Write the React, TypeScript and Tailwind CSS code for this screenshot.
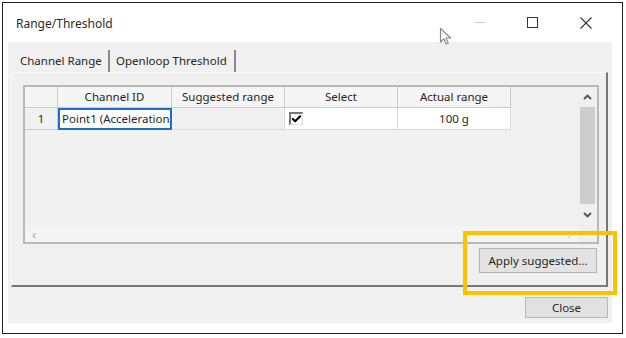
import { Check } from 'lucide-react';

const font = { fontFamily: '"Noto Sans", "Open Sans", sans-serif' };

// Dialog "Range/Threshold" with the Channel Range tab open.
export default function App() {
  return (
    <div className="relative w-[626px] h-[338px] bg-white p-[2px] text-[11.5px] text-[#262626]" style={font}>
      <div className="w-[621px] h-[332px] border border-[#222] bg-white flex flex-col">
        <TitleBar />
        <div className="ml-[5px] w-[604px] h-[281px] bg-[#f0f0f0] pl-[3px] pt-[6px] flex flex-col">
          <Tabs />
          <div className="w-[597px] h-[215px] border-l border-t border-[#fafafa] border-r-2 border-b-2 border-r-[#777] border-b-[#777] pl-[11px] pt-[12px] flex flex-col">
            <Grid />
            <div className="flex justify-end pr-[9px] mt-[4px]">
              <button className="w-[118px] h-[25px] bg-[#e3e3e3] border border-[#b4b4b4] leading-none">
                Apply suggested...
              </button>
            </div>
          </div>
          <div className="flex justify-end pr-[4px] mt-[10px]">
            <button className="w-[83px] h-[21px] bg-[#e1e1e1] border border-[#b9b9b9] leading-none">Close</button>
          </div>
        </div>
      </div>

      {/* annotation highlight */}
      <div className="absolute left-[463px] top-[231px] w-[154px] h-[64px] border-4 border-[#ffc000]" />

      {/* mouse pointer */}
      <svg className="absolute left-[439px] top-[27px]" width="14" height="19" viewBox="0 0 14 19">
        <path d="M1.5 1.5 L1.5 15 L4.8 11.8 L7.2 17 L9.2 16 L6.9 11 L11.5 11 Z" fill="#fff" stroke="#8a8a8a" strokeWidth="1.2" strokeLinejoin="round" />
      </svg>
    </div>
  );
}

function TitleBar() {
  return (
    <div className="h-[39px] flex items-center pl-[13px] pr-[10px] bg-white">
      <span className="text-[12px] text-[#2a2a2a] pt-[2px]">Range/Threshold</span>
      <div className="flex-1" />
      <div className="w-[53px] h-[30px] flex items-center justify-center">
        <div className="w-[10px] h-px bg-[#cfcfcf]" />
      </div>
      <div className="w-[53px] h-[30px] flex items-center justify-center">
        <div className="w-[11px] h-[11px] border border-[#333]" />
      </div>
      <div className="w-[53px] h-[30px] flex items-center justify-center">
        <svg width="12" height="12" viewBox="0 0 12 12">
          <path d="M0.5 0.5 L11.5 11.5 M11.5 0.5 L0.5 11.5" stroke="#333" strokeWidth="1.1" />
        </svg>
      </div>
    </div>
  );
}

function Tabs() {
  return (
    <div className="h-[24px] ml-[2px] flex items-end">
      <div className="w-[97px] h-[22px] flex items-center pl-[7px] border-r-2 border-[#8c8c8c] whitespace-nowrap">
        Channel Range
      </div>
      <div className="w-[126px] h-[22px] flex items-center pl-[6px] border-r-2 border-[#8c8c8c] whitespace-nowrap">
        Openloop Threshold
      </div>
    </div>
  );
}

const cols = [
  { label: '', w: 'w-[33px]' },
  { label: 'Channel ID', w: 'w-[114px]' },
  { label: 'Suggested range', w: 'w-[113px]' },
  { label: 'Select', w: 'w-[113px]' },
  { label: 'Actual range', w: 'w-[113px]' },
];

function Grid() {
  return (
    <div className="w-[576px] h-[159px] border-2 border-[#b8b8b8] bg-[#f1f1f1] flex flex-col">
      <div className="flex flex-1 min-h-0">
        <div className="flex-1 flex flex-col">
          <div className="flex h-[21px]">
            {cols.map((c) => (
              <div
                key={c.label}
                className={`${c.w} h-full flex items-center justify-center bg-[#f5f5f5] border-r border-b border-[#cacaca] whitespace-nowrap`}
              >
                {c.label}
              </div>
            ))}
          </div>
          <div className="flex h-[22px]">
            <div className="w-[33px] h-full flex items-center justify-center border-r border-b border-[#cacaca]">1</div>
            <div className="w-[114px] h-full bg-white border-2 border-[#1c6fc7] flex items-center pl-[2px] overflow-hidden whitespace-nowrap">
              Point1 (Acceleration)
            </div>
            <div className="w-[113px] h-full border-r border-b border-[#dadada]" />
            <div className="w-[113px] h-full bg-white border-r border-b border-[#dadada] flex items-center pl-[4px]">
              <div className="w-[14px] h-[13px] border-l-2 border-t-2 border-[#777] border-r border-b border-r-[#e0e0e0] border-b-[#e0e0e0] bg-white flex items-center justify-center">
                <Check size={12} strokeWidth={4.5} className="text-black" />
              </div>
            </div>
            <div className="w-[113px] h-full bg-white border-r border-b border-[#dadada] flex items-center justify-center">
              100 g
            </div>
          </div>
        </div>
        <div className="w-[19px] bg-[#f0f0f0] flex flex-col items-center">
          <div className="h-[20px] flex items-center justify-center">
            <Chevron up />
          </div>
          <div className="w-[15px] h-[97px] bg-[#cdcdcd]" />
          <div className="flex-1 flex items-center justify-center">
            <Chevron />
          </div>
        </div>
      </div>
      <div className="h-[16px] flex">
        <div className="flex-1 bg-[#f4f4f4] flex items-center justify-between px-[7px]">
          <span className="text-[#a8a8a8] text-[13px] leading-none">‹</span>
          <span className="text-[#d4d4d4] text-[13px] leading-none">›</span>
        </div>
        <div className="w-[19px] bg-[#f0f0f0]" />
      </div>
    </div>
  );
}

function Chevron({ up }: { up?: boolean }) {
  return (
    <svg width="9" height="6" viewBox="0 0 9 6">
      <path d={up ? 'M1 5 L4.5 1.5 L8 5' : 'M1 1 L4.5 4.5 L8 1'} fill="none" stroke="#505050" strokeWidth="1.8" />
    </svg>
  );
}
